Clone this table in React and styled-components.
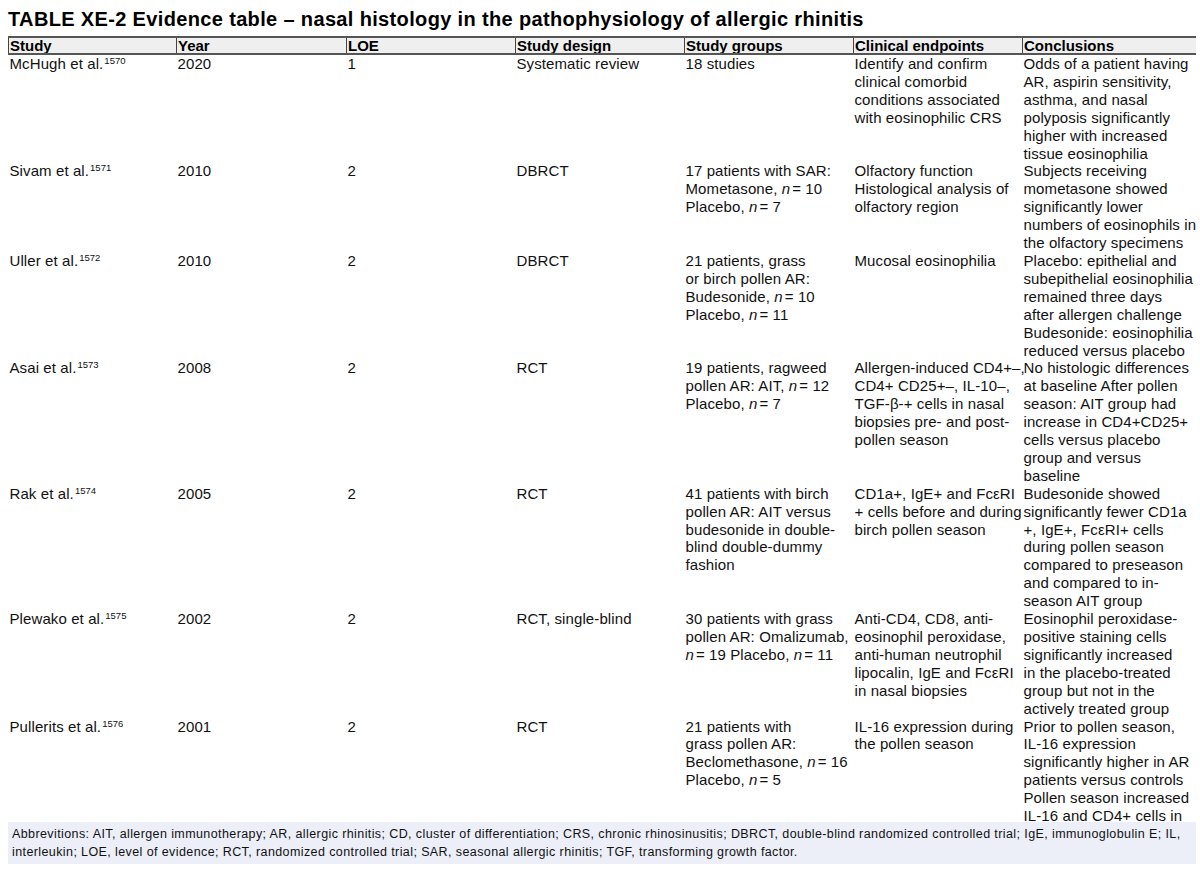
import React from "react";
import styled, { createGlobalStyle } from "styled-components";

const Global = createGlobalStyle`
  html, body { margin: 0; padding: 0; background: #fff; }
  body { font-family: "Liberation Sans", Arial, sans-serif; color: #000; }
`;

const Page = styled.div`
  width: 1188px;
  height: 872px;
  padding: 8px 4px 0 8px;
  overflow: hidden;
  display: flex;
  flex-direction: column;
`;

const Title = styled.h1`
  margin: 0 0 6px;
  font-size: 20px;
  line-height: 22px;
  font-weight: bold;
  letter-spacing: 0.35px;
  color: #000;
`;

const TableClip = styled.div`
  height: 786px;
  overflow: hidden;
`;

const Table = styled.table`
  width: 1188px;
  table-layout: fixed;
  border-collapse: collapse;
  font-size: 15px;
  line-height: 17.9px;
`;

const HeadCell = styled.th`
  text-align: left;
  font-weight: bold;
  background: #efefef;
  border-top: 2px solid #555;
  border-bottom: 2px solid #555;
  border-left: 1px solid #444;
  border-right: 1px solid #444;
  padding: 0 0 0 1px;
  height: 15px;
  line-height: 15px;
  white-space: nowrap;
  overflow: hidden;
`;

const Cell = styled.td`
  vertical-align: top;
  padding: 0 0 0 1px;
  white-space: nowrap;
  letter-spacing: 0.1px;
  color: #111;
`;

const Sup = styled.sup`
  font-size: 9.5px;
  line-height: 0;
  vertical-align: 5px;
  margin-left: 1px;
  letter-spacing: 0;
`;

const N = styled.i`
  font-style: italic;
  margin-right: 2px;
`;

const Footnote = styled.div`
  background: #eceef8;
  padding: 3px 4px;
  font-size: 12.5px;
  line-height: 18px;
  letter-spacing: 0.4px;
  color: #111;
  white-space: nowrap;
  overflow: hidden;
`;

const cols = [
  { label: "Study", w: 168 },
  { label: "Year", w: 170 },
  { label: "LOE", w: 169 },
  { label: "Study design", w: 169 },
  { label: "Study groups", w: 169 },
  { label: "Clinical endpoints", w: 169 },
  { label: "Conclusions", w: 174 },
];

const n = (v) => (
  <>
    <N>n</N>= {v}
  </>
);

const rows = [
  {
    study: "McHugh et al.",
    ref: "1570",
    year: "2020",
    loe: "1",
    design: ["Systematic review"],
    groups: ["18 studies"],
    endpoints: [
      "Identify and confirm",
      "clinical comorbid",
      "conditions associated",
      "with eosinophilic CRS",
    ],
    conclusions: [
      "Odds of a patient having",
      "AR, aspirin sensitivity,",
      "asthma, and nasal",
      "polyposis significantly",
      "higher with increased",
      "tissue eosinophilia",
    ],
  },
  {
    study: "Sivam et al.",
    ref: "1571",
    year: "2010",
    loe: "2",
    design: ["DBRCT"],
    groups: [
      "17 patients with SAR:",
      <>Mometasone, {n(10)}</>,
      <>Placebo, {n(7)}</>,
    ],
    endpoints: [
      "Olfactory function",
      "Histological analysis of",
      "olfactory region",
    ],
    conclusions: [
      "Subjects receiving",
      "mometasone showed",
      "significantly lower",
      "numbers of eosinophils in",
      "the olfactory specimens",
    ],
  },
  {
    study: "Uller et al.",
    ref: "1572",
    year: "2010",
    loe: "2",
    design: ["DBRCT"],
    groups: [
      "21 patients, grass",
      "or birch pollen AR:",
      <>Budesonide, {n(10)}</>,
      <>Placebo, {n(11)}</>,
    ],
    endpoints: ["Mucosal eosinophilia"],
    conclusions: [
      "Placebo: epithelial and",
      "subepithelial eosinophilia",
      "remained three days",
      "after allergen challenge",
      "Budesonide: eosinophilia",
      "reduced versus placebo",
    ],
  },
  {
    study: "Asai et al.",
    ref: "1573",
    year: "2008",
    loe: "2",
    design: ["RCT"],
    groups: [
      "19 patients, ragweed",
      <>pollen AR: AIT, {n(12)}</>,
      <>Placebo, {n(7)}</>,
    ],
    endpoints: [
      "Allergen-induced CD4+–,",
      "CD4+ CD25+–, IL-10–,",
      "TGF-β-+ cells in nasal",
      "biopsies pre- and post-",
      "pollen season",
    ],
    conclusions: [
      "No histologic differences",
      "at baseline After pollen",
      "season: AIT group had",
      "increase in CD4+CD25+",
      "cells versus placebo",
      "group and versus",
      "baseline",
    ],
  },
  {
    study: "Rak et al.",
    ref: "1574",
    year: "2005",
    loe: "2",
    design: ["RCT"],
    groups: [
      "41 patients with birch",
      "pollen AR: AIT versus",
      "budesonide in double-",
      "blind double-dummy",
      "fashion",
    ],
    endpoints: [
      "CD1a+, IgE+ and FcεRI",
      "+ cells before and during",
      "birch pollen season",
    ],
    conclusions: [
      "Budesonide showed",
      "significantly fewer CD1a",
      "+, IgE+, FcεRI+ cells",
      "during pollen season",
      "compared to preseason",
      "and compared to in-",
      "season AIT group",
    ],
  },
  {
    study: "Plewako et al.",
    ref: "1575",
    year: "2002",
    loe: "2",
    design: ["RCT, single-blind"],
    groups: [
      "30 patients with grass",
      "pollen AR: Omalizumab,",
      <>{n(19)} Placebo, {n(11)}</>,
    ],
    endpoints: [
      "Anti-CD4, CD8, anti-",
      "eosinophil peroxidase,",
      "anti-human neutrophil",
      "lipocalin, IgE and FcεRI",
      "in nasal biopsies",
    ],
    conclusions: [
      "Eosinophil peroxidase-",
      "positive staining cells",
      "significantly increased",
      "in the placebo-treated",
      "group but not in the",
      "actively treated group",
    ],
  },
  {
    study: "Pullerits et al.",
    ref: "1576",
    year: "2001",
    loe: "2",
    design: ["RCT"],
    groups: [
      "21 patients with",
      "grass pollen AR:",
      <>Beclomethasone, {n(16)}</>,
      <>Placebo, {n(5)}</>,
    ],
    endpoints: ["IL-16 expression during", "the pollen season"],
    conclusions: [
      "Prior to pollen season,",
      "IL-16 expression",
      "significantly higher in AR",
      "patients versus controls",
      "Pollen season increased",
      "IL-16 and CD4+ cells in",
    ],
  },
];

const Lines = ({ items }) =>
  items.map((t, i) => (
    <React.Fragment key={i}>
      {i > 0 && <br />}
      {t}
    </React.Fragment>
  ));

export default function App() {
  return (
    <>
      <Global />
      <Page>
        <Title>
          TABLE XE-2 Evidence table – nasal histology in the pathophysiology of
          allergic rhinitis
        </Title>
        <TableClip>
          <Table>
            <colgroup>
              {cols.map((c) => (
                <col key={c.label} style={{ width: c.w }} />
              ))}
            </colgroup>
            <thead>
              <tr>
                {cols.map((c) => (
                  <HeadCell key={c.label}>{c.label}</HeadCell>
                ))}
              </tr>
            </thead>
            <tbody>
              {rows.map((r) => (
                <tr key={r.ref}>
                  <Cell>
                    {r.study}
                    <Sup>{r.ref}</Sup>
                  </Cell>
                  <Cell>{r.year}</Cell>
                  <Cell>{r.loe}</Cell>
                  <Cell>
                    <Lines items={r.design} />
                  </Cell>
                  <Cell>
                    <Lines items={r.groups} />
                  </Cell>
                  <Cell>
                    <Lines items={r.endpoints} />
                  </Cell>
                  <Cell>
                    <Lines items={r.conclusions} />
                  </Cell>
                </tr>
              ))}
            </tbody>
          </Table>
        </TableClip>
        <Footnote>
          Abbrevitions: AIT, allergen immunotherapy; AR, allergic rhinitis; CD,
          cluster of differentiation; CRS, chronic rhinosinusitis; DBRCT,
          double-blind randomized controlled trial; IgE, immunoglobulin E; IL,
          <br />
          interleukin; LOE, level of evidence; RCT, randomized controlled trial;
          SAR, seasonal allergic rhinitis; TGF, transforming growth factor.
        </Footnote>
      </Page>
    </>
  );
}
